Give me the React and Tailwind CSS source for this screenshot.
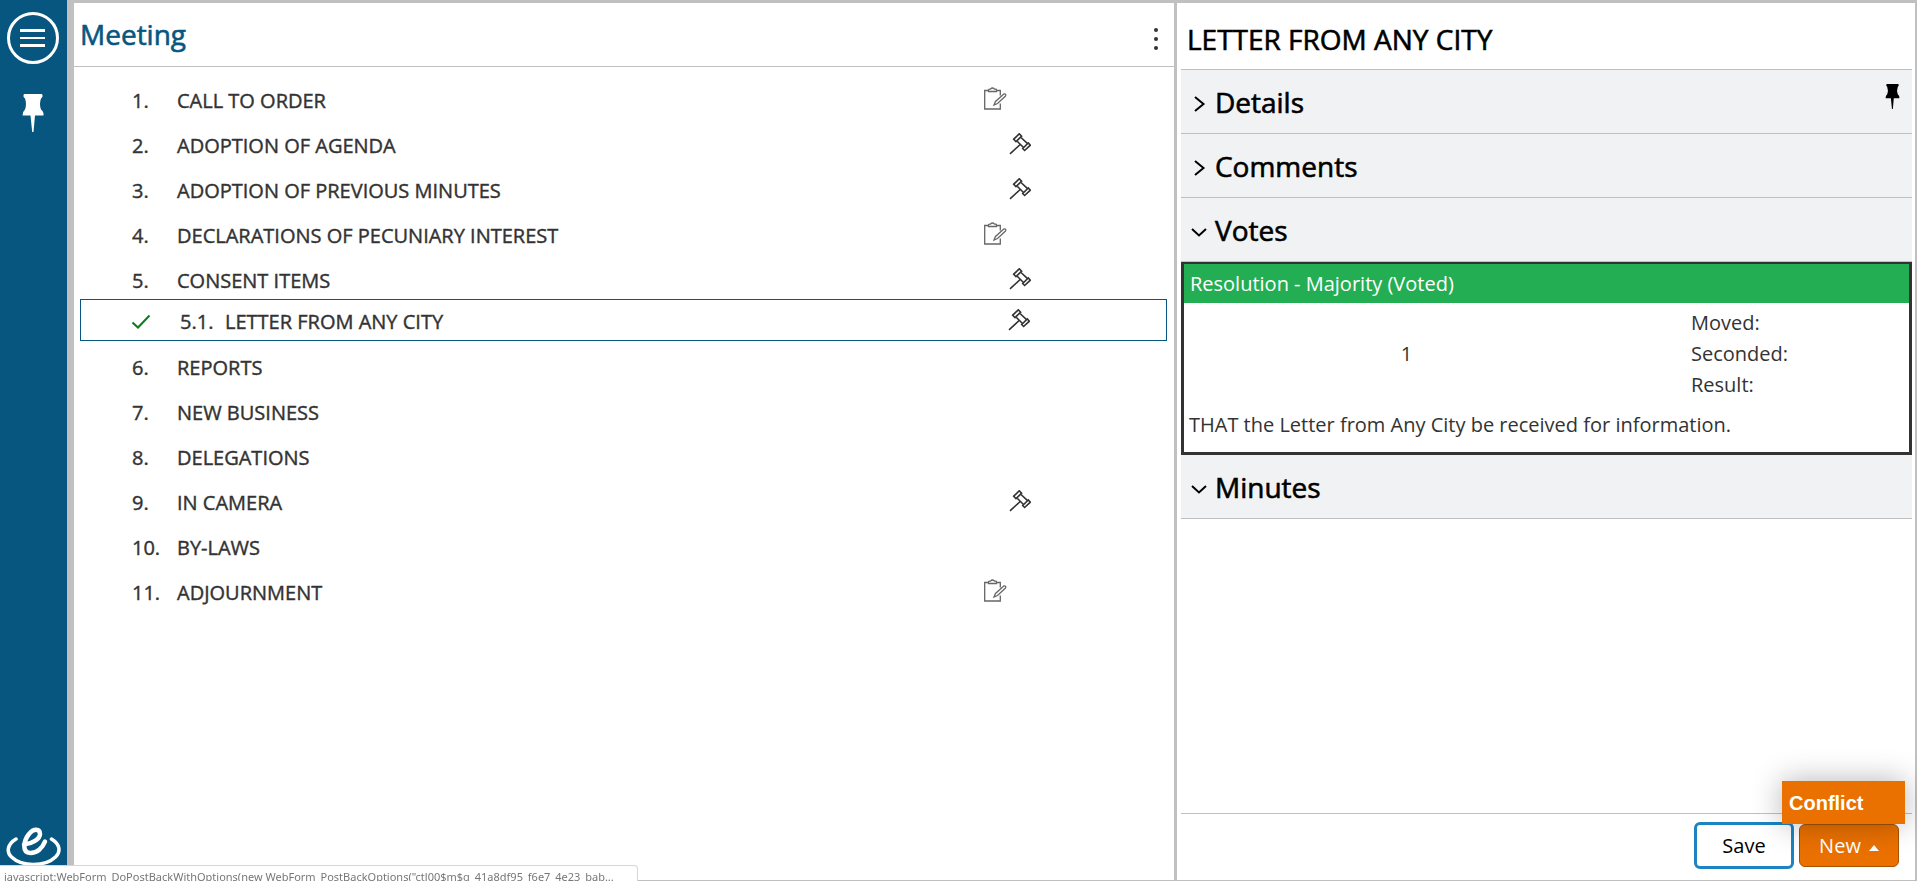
import { useState } from "react";

const agenda = [
  { no: "1.", title: "CALL TO ORDER", icon: "note" },
  { no: "2.", title: "ADOPTION OF AGENDA", icon: "gavel" },
  { no: "3.", title: "ADOPTION OF PREVIOUS MINUTES", icon: "gavel" },
  { no: "4.", title: "DECLARATIONS OF PECUNIARY INTEREST", icon: "note" },
  {
    no: "5.",
    title: "CONSENT ITEMS",
    icon: "gavel",
    child: { no: "5.1.", title: "LETTER FROM ANY CITY", icon: "gavel" },
  },
  { no: "6.", title: "REPORTS" },
  { no: "7.", title: "NEW BUSINESS" },
  { no: "8.", title: "DELEGATIONS" },
  { no: "9.", title: "IN CAMERA", icon: "gavel" },
  { no: "10.", title: "BY-LAWS" },
  { no: "11.", title: "ADJOURNMENT", icon: "note" },
];

function MenuIcon() {
  return (
    <svg viewBox="0 0 52 52" className="size-[52px]" fill="none" stroke="#fff" strokeWidth="3" aria-hidden="true">
      <circle cx="26" cy="26" r="24.5" />
      <path d="M13 18.5h25M13 33.5h25" />
      <path d="M13 26h25" strokeWidth="2" />
    </svg>
  );
}

function PinIcon({ className }) {
  return (
    <svg viewBox="0 0 22 38" className={className} fill="currentColor" aria-hidden="true">
      <path d="M2 0H20Q21.500 2.500 19 4.500Q17 10 19 15.500Q22 18 21.500 21.500H13L11.500 38H10.200L8.500 21.500H.5Q.3 18 3 15.500Q5 10 3 4.500Q.5 2.500 2 0Z" />
    </svg>
  );
}

function LogoIcon() {
  return (
    <svg viewBox="0 0 56 42" className="h-[42px] w-14" fill="none" stroke="#fff" strokeLinecap="round" aria-hidden="true">
      <path d="M11 13C2.500 18 1 26 6.500 31C17 41 40 41 50.500 31C56.500 25 54.500 18 46.500 13" strokeWidth="3.500" />
      <path d="M19 18.500C27 18 35 13 35 8C35 2.500 28.500 2 24 8C18.500 15 16.500 26.500 25.500 27C32 27 37.500 22 40 15.500" strokeWidth="4.500" />
    </svg>
  );
}

function NoteIcon() {
  return (
    <svg viewBox="0 0 24 24" className="size-6" fill="none" stroke="#666" strokeWidth="1.300" aria-hidden="true">
      <path d="M6 3.500H1.700V22H17.300V16.500M13 3.500H17.300V8.500" />
      <path d="M5.500 4.500V3Q5.500 2.200 6.500 2.200H7.500Q9.500 -.2 11.500 2.200H12.500Q13.500 2.200 13.500 3V4.500Z" />
      <path d="M11 18L12.500 14.500L20.500 7.200Q22 6.500 22.700 7.500Q23 8.500 22.300 9.300L14.500 16.500Z" />
    </svg>
  );
}

function GavelIcon() {
  return (
    <svg viewBox="0 0 22 22" className="size-[22px]" fill="none" stroke="#333" strokeWidth="1.600" aria-hidden="true">
      <path d="M4.700 6.200L10.300 .8L12.600 3.200L7 8.600ZM13.700 15.500L19.300 10L21.300 12.200L15.600 17.500Z" />
      <path d="M12 4.500L18.300 10.300M8.200 8.300L14.500 14.500M11.200 11.500L1 20.800" />
    </svg>
  );
}

function Chevron({ open }) {
  return (
    <svg viewBox="0 0 16 16" className="mt-[5px] size-4 shrink-0" fill="none" stroke="#000" strokeWidth="2" aria-hidden="true">
      {open ? <path d="M1 5L8 11.500L15 5" /> : <path d="M4 1L12.500 8L4 15" />}
    </svg>
  );
}

function RowIcon({ kind }) {
  return (
    <span className="flex w-[52px] shrink-0">
      {kind === "note" && <NoteIcon />}
      {kind === "gavel" && <span className="pl-[26px]"><GavelIcon /></span>}
    </span>
  );
}

function Section({ title, open, onToggle, children }) {
  return (
    <section>
      <h3 className="border-b border-[#c0c0c0] bg-[#f1f2f4]">
        <button
          type="button"
          aria-expanded={open}
          onClick={onToggle}
          className="flex h-[63px] w-full items-center gap-2 pl-[10px] text-left text-[28px] text-black [-webkit-text-stroke:0.6px_#000]"
        >
          <Chevron open={open} />
          {title}
        </button>
      </h3>
      {open && children}
    </section>
  );
}

export default function App() {
  const [open, setOpen] = useState({ Details: false, Comments: false, Votes: true, Minutes: true });
  const toggle = (name) => setOpen({ ...open, [name]: !open[name] });

  return (
    <div className="flex h-screen overflow-hidden bg-[#c0c0c0] font-['Open_Sans',sans-serif] text-[#333]">
      <nav className="flex w-[67px] shrink-0 flex-col items-center bg-[#07567f] pt-3 pr-[2px] pb-[13px] text-white">
        <button type="button" aria-label="Menu"><MenuIcon /></button>
        <button type="button" aria-label="Pin menu" className="mt-[30px]"><PinIcon className="h-[38px] w-[22px]" /></button>
        <a href="#home" aria-label="Home" className="mt-auto"><LogoIcon /></a>
      </nav>

      <main className="mt-[3px] mb-px ml-[7px] flex min-w-0 flex-1 flex-col bg-white">
        <header className="flex h-16 items-center justify-between border-b border-[#c0c0c0] pr-3 pb-[2px] pl-[6px]">
          <h1 className="text-[28px] text-[#07567f] [-webkit-text-stroke:0.6px_#07567f]">Meeting</h1>
          <button type="button" aria-label="More options" className="flex h-9 w-3 flex-col items-center justify-end gap-[5px] pb-[2px]">
            <span className="size-1 rounded-full bg-[#333]" />
            <span className="size-1 rounded-full bg-[#333]" />
            <span className="size-1 rounded-full bg-[#333]" />
          </button>
        </header>
        <ol className="pt-[11px] pr-[7px] pl-[6px] text-[20px] [-webkit-text-stroke:0.4px_#333]">
          {agenda.map((item) => (
            <li key={item.no}>
              <div className="flex h-[45px] items-center pr-[132px] pl-[52px]">
                <span className="w-[45px] shrink-0">{item.no}</span>
                <a href="#item" className="flex-1">{item.title}</a>
                <span className="pb-1"><RowIcon kind={item.icon} /></span>
              </div>
              {item.child && (
                <div className="-mt-1 mb-1 flex h-[42px] items-center border border-[#07567f] pr-[132px] pl-[51px]">
                  <svg viewBox="0 0 20 16" className="mt-1 h-4 w-5" fill="none" stroke="#0b7d1c" strokeWidth="2" aria-label="Done">
                    <path d="M.5 8.500L6 13.500L17.500 1.500" />
                  </svg>
                  <span className="mt-1 ml-[28px] w-[45px] shrink-0">{item.child.no}</span>
                  <a href="#item" className="mt-1 flex-1">{item.child.title}</a>
                  <RowIcon kind={item.child.icon} />
                </div>
              )}
            </li>
          ))}
        </ol>
      </main>

      <aside className="mt-[3px] mr-[2px] mb-px ml-[3px] flex w-[38.500%] shrink-0 flex-col bg-white pr-[3px] pl-1">
        <h2 className="flex h-[66px] items-center pt-[6px] pl-[6px] text-[28px] text-black [-webkit-text-stroke:0.6px_#000]">
          LETTER FROM ANY CITY
        </h2>
        <div className="relative border-t border-[#c0c0c0]">
          <Section title="Details" open={open.Details} onToggle={() => toggle("Details")} />
          <button type="button" aria-label="Pin panel" className="absolute top-[14px] right-3 text-black">
            <PinIcon className="h-[25px] w-[15px]" />
          </button>
        </div>
        <Section title="Comments" open={open.Comments} onToggle={() => toggle("Comments")} />
        <Section title="Votes" open={open.Votes} onToggle={() => toggle("Votes")}>
          <article className="border-3 border-t-2 border-[#333] text-[20px] leading-[31px]">
            <h4 className="bg-[#24ae54] px-[6px] py-1 text-white">Resolution - Majority (Voted)</h4>
            <div className="flex items-center pt-1">
              <p className="w-[445px] shrink text-center">1</p>
              <ul className="ml-auto w-[218px]">
                <li>Moved:</li>
                <li>Seconded:</li>
                <li>Result:</li>
              </ul>
            </div>
            <p className="px-[5px] pt-[9px] pb-3">THAT the Letter from Any City be received for information.</p>
          </article>
        </Section>
        <Section title="Minutes" open={open.Minutes} onToggle={() => toggle("Minutes")} />
        <footer className="mt-auto flex h-[67px] items-start justify-end gap-[5px] border-t border-[#c0c0c0] pt-2 pr-[13px] text-[20px]">
          <button type="button" className="h-[47px] w-[100px] rounded-md border-3 border-[#1c84c0] bg-white text-black">Save</button>
          <div className="relative pt-[2px]">
            <button type="button" aria-haspopup="menu" aria-expanded="true" className="flex h-[43px] w-[100px] items-center justify-center gap-2 rounded-md border border-[#a85200] bg-[#ea7000] text-white">
              New
              <svg viewBox="0 0 10 6" className="mt-1 h-[6px] w-[10px]" fill="#fff" aria-hidden="true"><path d="M0 6L5 0L10 6Z" /></svg>
            </button>
            <div role="menu" className="absolute right-[-6px] bottom-[43px] w-[123px] bg-[#ea7000] shadow-[0_0_30px_rgba(0,0,0,0.3)]">
              <button type="button" role="menuitem" className="h-[43px] w-full px-[7px] text-left font-['Liberation_Sans',Arial,sans-serif] font-bold text-white">Conflict</button>
            </div>
          </div>
        </footer>
      </aside>

      <div className="fixed bottom-0 left-0 h-4 w-[638px] rounded-tr border-t border-r border-[#d5d5d5] bg-white pl-1 font-['Noto_Sans',sans-serif] text-[11px] leading-[22px] whitespace-nowrap text-[#777]">
        javascript:WebForm_DoPostBackWithOptions(new WebForm_PostBackOptions("ctl00$m$g_41a8df95_f6e7_4e23_bab...
      </div>
    </div>
  );
}
